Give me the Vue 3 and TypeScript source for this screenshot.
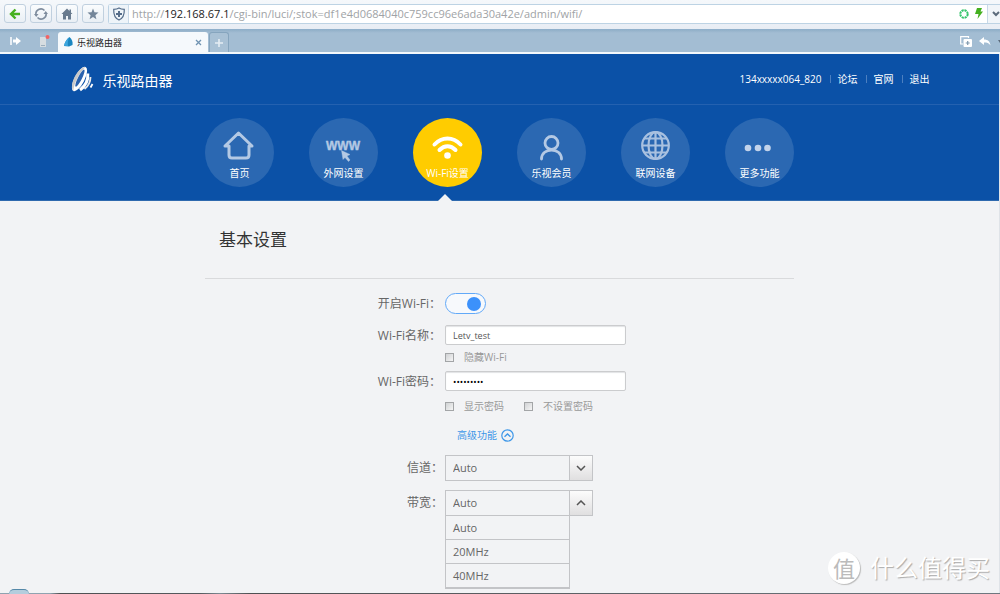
<script setup lang="ts">
import { ref } from 'vue'

interface NavItem {
  id: string
  label: string
}

const navItems: NavItem[] = [
  { id: 'home', label: '首页' },
  { id: 'wan', label: '外网设置' },
  { id: 'wifi', label: 'Wi-Fi设置' },
  { id: 'member', label: '乐视会员' },
  { id: 'devices', label: '联网设备' },
  { id: 'more', label: '更多功能' },
]
const accountLinks: string[] = ['论坛', '官网', '退出']
const bandwidths: string[] = ['Auto', '20MHz', '40MHz']

const active = ref('wifi')
const enabled = ref(true)
const ssid = ref('Letv_test')
const password = ref('letv12345')
const hidden = ref(false)
const showPassword = ref(false)
const noPassword = ref(false)
const channel = ref('Auto')
const bandwidth = ref('Auto')
</script>

<template>
  <div class="window">
    <div class="toolbar">
      <button class="tool" type="button" aria-label="后退">
        <svg width="12" height="12" viewBox="0 0 12 12"><path d="M6.5 1.5 2 6l4.500 4.500M2.500 6H11" fill="none" stroke="#45b020" stroke-width="2.400" /></svg>
      </button>
      <button class="tool" type="button" aria-label="刷新">
        <svg width="14" height="14" viewBox="0 0 14 14"><path d="M2 8a5 5 0 0 1 8.500-4.500M12 6a5 5 0 0 1-8.500 4.500" fill="none" stroke="#7f8d9e" stroke-width="1.600" /><path d="M0 7h4.500L2.200 10zM9.500 7H14l-2.300-3z" fill="#7f8d9e" /></svg>
      </button>
      <button class="tool" type="button" aria-label="主页">
        <svg width="12" height="12" viewBox="0 0 12 12"><path d="M6 .5 0.500 6H2v5.500h3V8h2v3.500h3V6h1.500L10 4.500V1.500H8.500V3z" fill="#687a8e" /></svg>
      </button>
      <button class="tool" type="button" aria-label="收藏">
        <svg width="12" height="12" viewBox="0 0 12 12"><path d="m6 .5 1.500 3.800 4 .3-3.100 2.600 1 4L6 9l-3.400 2.200 1-4L.5 4.600l4-.3z" fill="#74869a" /></svg>
      </button>
      <div class="address">
        <span class="shield">
          <svg width="14" height="14" viewBox="0 0 14 14"><path d="M7 1c2 1.300 3.500 1.300 5.300 1.300C12.500 8 11 11.500 7 13 3 11.500 1.500 8 1.700 2.300 3.500 2.300 5 2.300 7 1z" fill="none" stroke="#566e8b" stroke-width="1.200" /><path d="M7 4v6M4 7h6" stroke="#566e8b" stroke-width="2" /></svg>
        </span>
        <span class="url">http://<b>192.168.67.1</b>/cgi-bin/luci/;stok=df1e4d0684040c759cc96e6ada30a42e/admin/wifi/</span>
        <svg width="10" height="10" viewBox="0 0 10 10"><circle cx="5" cy="5" r="3.700" fill="none" stroke="#35c46b" stroke-width="2" stroke-dasharray="2.200 .7" /></svg>
        <svg class="bolt" width="8" height="11" viewBox="0 0 8 11"><path d="M2 0h5L5.500 3.500H8L2.500 11 3.500 6H0z" fill="#45b020" /></svg>
        <button class="drop" type="button" aria-label="展开地址栏">
          <svg width="8" height="6" viewBox="0 0 8 6"><path d="m1 1 3 3 3-3" fill="none" stroke="#5c6b7b" stroke-width="2" /></svg>
        </button>
      </div>
    </div>

    <div class="tabs">
      <button class="plain side" type="button" aria-label="侧边栏">
        <svg width="12" height="10" viewBox="0 0 12 10"><path d="M1 1v8" stroke="#fff" stroke-width="1.500" /><path d="M3 3.500h3V1l5 4-5 4V6.500H3z" fill="#fff" /></svg>
      </button>
      <button class="plain phone" type="button" aria-label="手机">
        <svg width="11" height="13" viewBox="0 0 11 13"><path d="M1 2h6v10H1z" fill="#d6dde1" /><path d="M2 10.500h4" stroke="#9caebc" /><circle cx="8.500" cy="2" r="2" fill="#f26464" /></svg>
      </button>
      <div class="tab">
        <svg width="9" height="10" viewBox="0 0 9 10"><path d="M5.500 0C8 2 9 5 8.500 8L5 9.500 0 9c.5-3 2.500-7 5.500-9z" fill="#1a86c0" /><path d="M5 .5C2 3 .5 6 .2 8.800L4 9c-.5-3 0-6 1-8.500z" fill="#3ba6de" /></svg>
        <span class="tab-title">乐视路由器</span>
        <button class="plain" type="button" aria-label="关闭标签">
          <svg width="7" height="7" viewBox="0 0 7 7"><path d="m1 1 5 5M6 1 1 6" stroke="#6f93b2" stroke-width="1.300" /></svg>
        </button>
      </div>
      <button class="add" type="button" aria-label="新标签">
        <svg width="8" height="8" viewBox="0 0 8 8"><path d="M4 0v8M0 4h8" stroke="#e5edf3" stroke-width="1.600" /></svg>
      </button>
      <span class="grow"></span>
      <button class="plain" type="button" aria-label="复制标签">
        <svg width="12" height="11" viewBox="0 0 12 11"><path d="M8.500 2V.7H.7V8H3" fill="none" stroke="#fff" stroke-width="1.200" /><rect x="3.500" y="3" width="8.500" height="8" rx="1" fill="#fff" /><path d="M7.700 5v4M5.700 7h4" stroke="#7f99ae" stroke-width="1.200" /></svg>
      </button>
      <button class="plain undo" type="button" aria-label="撤销关闭">
        <svg width="12" height="9" viewBox="0 0 12 9"><path d="M0 4 5 0v2.500c4 0 6 2 6.500 6C10 6 8 5.500 5 5.500V8z" fill="#fff" /></svg>
      </button>
      <svg width="2" height="3" viewBox="0 0 2 3"><path d="M0 0h2v3z" fill="#5c6b7b" /></svg>
    </div>

    <main class="page">
      <header class="hero">
        <div class="brandbar">
          <div class="brand-inner">
            <a class="brand" href="#">
              <svg width="24" height="28" viewBox="0 0 24 28">
                <path d="M17.800 8.500c.5 6-2.500 12.500-7.800 16.500" fill="none" stroke="#fff" stroke-width="3" />
                <path d="M20.500 12c0 5-2 9-6 12" fill="none" stroke="#e8e8e8" stroke-width="1.800" />
                <path d="m22.500 19-2 3.500" fill="none" stroke="#fff" stroke-width="1.800" />
                <g transform="rotate(27 9.500 14)">
                  <ellipse cx="9.500" cy="14" rx="5" ry="13.500" fill="#fff" />
                  <path d="M9.500.500c-7 3-7 24 0 27-3-6-3-21 0-27z" fill="#c9c9c9" />
                  <ellipse cx="9.500" cy="13" rx="2" ry="9.500" fill="#2a62ae" />
                </g>
              </svg>
              <span>乐视路由器</span>
            </a>
            <nav class="account" aria-label="账户">
              <a class="user" href="#">134xxxxx064_820</a>
              <a v-for="link in accountLinks" :key="link" class="link" href="#">{{ link }}</a>
            </nav>
          </div>
        </div>

        <nav class="nav" aria-label="主导航">
          <a
            v-for="item in navItems"
            :key="item.id"
            href="#"
            :class="['nav-item', { active: active === item.id }]"
            @click.prevent="active = item.id"
          >
            <svg class="glyph" viewBox="0 0 69 48">
              <g v-if="item.id === 'home'" fill="none" stroke="#b4c9e4" stroke-width="3" stroke-linecap="round" stroke-linejoin="round">
                <path d="M20 28 33.500 15 47 28M24 28v9q0 3 3 3h14q3 0 3-3V28M20 28h4M44 28h3" />
              </g>
              <g v-else-if="item.id === 'wan'" fill="#b4c9e4" stroke="#b4c9e4" stroke-width=".4">
                <text class="www" x="34" y="32" text-anchor="middle">WWW</text>
                <path d="m32.500 32.500 8.500 4-3 1.500 3 4-1.500 1.500-3.500-4-2 2z" />
              </g>
              <g v-else-if="item.id === 'wifi'" fill="none" stroke="#fff" stroke-width="4" stroke-linecap="round">
                <path d="M21.500 26.500c7.500-8 18.500-8 26 0M26.500 32c5-5 11-5 16 0" />
                <circle cx="34.500" cy="37.500" r="3.300" fill="#fff" stroke="none" />
              </g>
              <g v-else-if="item.id === 'member'" fill="none" stroke="#b4c9e4" stroke-width="2.800" stroke-linecap="round">
                <circle cx="34.500" cy="25" r="6.500" />
                <path d="M24.500 41c0-12 20-12 20 0" />
              </g>
              <g v-else-if="item.id === 'devices'" fill="none" stroke="#a9c1e0" stroke-width="2.200">
                <circle cx="34.500" cy="27.500" r="13.300" />
                <ellipse cx="34.500" cy="27.500" rx="7" ry="13.300" />
                <path d="M34.500 14v27M21 27.500h27M23 20.500h23M23 34.500h23" />
              </g>
              <g v-else fill="#c3d3ea">
                <circle cx="23" cy="30" r="3.300" /><circle cx="33" cy="30" r="3.300" /><circle cx="42.500" cy="30" r="3.300" />
              </g>
            </svg>
            <span class="nav-label">{{ item.label }}</span>
          </a>
        </nav>
      </header>

      <section class="content">
        <h1>基本设置</h1>
        <form class="form" @submit.prevent>
          <div class="row toggle-row">
            <label class="label" for="enable">开启Wi-Fi：</label>
            <input id="enable" v-model="enabled" class="switch" type="checkbox" role="switch" />
          </div>
          <div class="row">
            <label class="label" for="ssid">Wi-Fi名称：</label>
            <input id="ssid" v-model="ssid" class="text" type="text" />
          </div>
          <div class="checks">
            <label class="check"><input v-model="hidden" type="checkbox" /><span>隐藏Wi-Fi</span></label>
          </div>
          <div class="row">
            <label class="label" for="password">Wi-Fi密码：</label>
            <input id="password" v-model="password" class="text" :type="showPassword ? 'text' : 'password'" />
          </div>
          <div class="checks second">
            <label class="check"><input v-model="showPassword" type="checkbox" /><span>显示密码</span></label>
            <label class="check"><input v-model="noPassword" type="checkbox" /><span>不设置密码</span></label>
          </div>
          <a class="advanced" href="#">
            <span>高级功能</span>
            <svg width="13" height="13" viewBox="0 0 13 13"><circle cx="6.500" cy="6.500" r="5.700" fill="none" stroke="#3e97e8" stroke-width="1.200" /><path d="m3.500 7.700 3-2.700 3 2.700" fill="none" stroke="#3e97e8" stroke-width="1.400" /></svg>
          </a>
          <div class="row select-row">
            <label class="label" for="channel">信道：</label>
            <div class="combo">
              <select id="channel" v-model="channel"><option>Auto</option></select>
              <span class="arrow"><svg width="10" height="6" viewBox="0 0 10 6"><path d="m1 1 4 4 4-4" fill="none" stroke="#555" stroke-width="1.500" /></svg></span>
            </div>
          </div>
          <div class="row select-row">
            <label class="label" for="bandwidth">带宽：</label>
            <div class="combo">
              <select id="bandwidth" v-model="bandwidth">
                <option v-for="b in bandwidths" :key="b">{{ b }}</option>
              </select>
              <span class="arrow"><svg width="10" height="6" viewBox="0 0 10 6"><path d="m1 5 4-4 4 4" fill="none" stroke="#555" stroke-width="1.500" /></svg></span>
            </div>
          </div>
          <ul class="options">
            <li v-for="b in bandwidths" :key="b">
              <button type="button" @click="bandwidth = b">{{ b }}</button>
            </li>
          </ul>
        </form>
      </section>
    </main>

    <div class="watermark"><span class="seal">值</span><span>什么值得买</span></div>
    <div class="taskbar"><span class="orb"></span></div>
  </div>
</template>

<style>
body {
  margin: 0;
  overflow: hidden;
  background: #f2f3f5;
}
</style>

<style scoped>
.window {
  position: relative;
  display: flex;
  flex-direction: column;
  min-height: 100vh;
  font-family: "Open Sans", "Noto Sans CJK SC", sans-serif;
  font-size: 12px;
  color: #666;
}
.window * {
  box-sizing: border-box;
}
svg {
  display: block;
  flex: none;
}
a {
  color: inherit;
  text-decoration: none;
}
button,
input,
select {
  margin: 0;
  font-family: inherit;
}
.toolbar {
  display: flex;
  align-items: center;
  gap: 4px;
  height: 30px;
  padding: 2px 0 4px 4px;
  border-bottom: 1px solid #90b0cb;
  background: linear-gradient(#f5f8fb, #e8edf4);
}
.tool {
  display: flex;
  align-items: center;
  justify-content: center;
  width: 22px;
  height: 19px;
  padding: 0;
  border: 1px solid #c0d0df;
  border-radius: 3px;
  background: linear-gradient(#fafcfd, #e9eff5);
}
.address {
  display: flex;
  flex: 1;
  align-items: center;
  min-width: 0;
  height: 20px;
  border: 1px solid #bdd3e4;
  border-right: 0;
  border-radius: 3px 0 0 3px;
  background: #fff;
}
.shield {
  display: flex;
  align-items: center;
  justify-content: center;
  width: 20px;
  height: 100%;
  border-right: 1px solid #c8d9e8;
  background: #eef4f9;
}
.url {
  flex: 1;
  min-width: 0;
  padding-left: 3px;
  overflow: hidden;
  white-space: nowrap;
  font-size: 11px;
  color: #a0a3a6;
}
.url b {
  font-weight: 400;
  color: #222;
}
.bolt {
  margin: 0 4px 0 6px;
}
.drop {
  display: flex;
  align-items: center;
  justify-content: flex-end;
  width: 13px;
  height: 100%;
  padding: 0;
  border: 0;
  border-left: 1px solid #c8d9e8;
  background: #f1f5f9;
}
.tabs {
  display: flex;
  align-items: center;
  height: 24px;
  border-bottom: 2px solid #f3f8fc;
  background: linear-gradient(#92b0c9, #a3bdd3 3px);
}
.plain {
  padding: 0;
  border: 0;
  background: none;
}
.side {
  margin-left: 10px;
}
.phone {
  margin-left: 17px;
}
.tab {
  display: flex;
  align-items: center;
  align-self: flex-end;
  width: 150px;
  height: 20px;
  margin-left: 8px;
  padding: 0 6px;
  border-radius: 3px 3px 0 0;
  background: #f5f9fc;
}
.tab-title {
  flex: 1;
  padding-left: 4px;
  font-size: 9px;
  color: #222;
}
.add {
  display: flex;
  align-items: center;
  justify-content: center;
  align-self: flex-end;
  width: 20px;
  height: 20px;
  margin-left: 1px;
  padding: 0;
  border: 1px solid #86a5be;
  border-bottom: 0;
  border-radius: 3px 3px 0 0;
  background: #a9c1d5;
}
.grow {
  flex: 1;
}
.undo {
  margin: 0 7px;
}
.page {
  flex: 1;
  border-right: 1px solid #dfe3e8;
  background: #f2f3f5;
}
.hero {
  height: 147px;
  border-bottom: 1px solid #2e69ae;
  background: #0b51a7;
}
.brandbar {
  height: 51px;
  border-bottom: 1px solid #2461b0;
}
.brand-inner {
  display: flex;
  align-items: center;
  justify-content: space-between;
  max-width: 860px;
  height: 50px;
  margin: 0 auto;
  color: #fff;
}
.brand {
  display: flex;
  align-items: center;
  gap: 9px;
  font-size: 14px;
}
.brand span {
  padding-top: 2px;
}
.account {
  display: flex;
  font-size: 10px;
  line-height: 12px;
}
.link {
  display: flex;
  align-items: center;
}
.link::before {
  width: 1px;
  height: 8px;
  margin: 0 7px 0 8px;
  background: #4c7fc0;
  content: "";
}
.nav {
  display: flex;
  justify-content: space-between;
  max-width: 589px;
  margin: 13px auto 0;
}
.nav-item {
  position: relative;
  display: flex;
  flex-direction: column;
  align-items: center;
  width: 69px;
  height: 69px;
  border-radius: 50%;
  background: #2b68b2;
  color: #fff;
}
.nav-item.active {
  background: #fc0;
}
.nav-item.active::after {
  position: absolute;
  top: 76px;
  left: 50%;
  margin-left: -10px;
  border: 7px solid transparent;
  border-top: 0;
  border-bottom-color: #f2f3f5;
  content: "";
}
.glyph {
  width: 69px;
  height: 48px;
}
.www {
  font: bold 12px "Liberation Sans", sans-serif;
}
.nav-label {
  font-size: 10px;
  line-height: 15px;
}
.content {
  max-width: 589px;
  margin: 0 auto;
}
h1 {
  height: 78px;
  margin: 0;
  padding: 0 14px;
  border-bottom: 1px solid #d9dadc;
  font-size: 17px;
  font-weight: 400;
  line-height: 78px;
  color: #333;
}
.form {
  padding-top: 14px;
}
.row {
  display: flex;
  gap: 4px;
  height: 20px;
}
.label {
  width: 236px;
  line-height: 22px;
  text-align: right;
  white-space: nowrap;
}
.toggle-row {
  height: 22px;
  margin-bottom: 10px;
}
.switch {
  display: flex;
  align-items: center;
  justify-content: flex-end;
  width: 41px;
  height: 21px;
  padding: 0 4px;
  border: 1px solid #62a9f8;
  border-radius: 11px;
  appearance: none;
  background: #f7f9fc;
}
.switch::before {
  width: 14px;
  height: 14px;
  border-radius: 50%;
  background: #3c91fb;
  content: "";
}
.text {
  width: 181px;
  height: 20px;
  padding: 0 7px;
  border: 1px solid #cbccce;
  border-radius: 2px;
  background: #fff;
  box-shadow: inset 0 1px 1px #e2e3e5;
  font-size: 9px;
  color: #555;
}
.text[type="password"] {
  color: #000;
}
.checks {
  display: flex;
  gap: 20px;
  height: 26px;
  padding: 5px 0 0 240px;
}
.checks.second {
  height: 38px;
  padding-top: 8px;
}
.check {
  display: flex;
  align-items: center;
  gap: 10px;
  height: 14px;
  font-size: 10px;
  line-height: 14px;
  color: #999;
}
.check input {
  width: 9px;
  height: 9px;
  border: 1px solid #a3a5a7;
  appearance: none;
  background: linear-gradient(135deg, #d0d2d4, #f5f5f5);
}
.advanced {
  display: flex;
  align-items: center;
  gap: 4px;
  width: max-content;
  height: 13px;
  margin: 0 0 13px 252px;
  font-size: 10px;
  line-height: 13px;
  color: #3e97e8;
}
.select-row {
  gap: 2px;
  height: 26px;
  margin-bottom: 9px;
}
.select-row .label {
  width: 238px;
  line-height: 26px;
}
.combo {
  position: relative;
  width: 148px;
}
.combo select {
  display: block;
  width: 100%;
  height: 26px;
  padding: 0 30px 2px 7px;
  border: 1px solid #c3c4c7;
  border-radius: 0;
  appearance: none;
  background: #f2f3f5;
  font-size: 11px;
  color: #666;
}
.arrow {
  position: absolute;
  top: 1px;
  right: 1px;
  bottom: 1px;
  display: flex;
  align-items: center;
  justify-content: center;
  width: 23px;
  border-left: 1px solid #c3c4c7;
  background: linear-gradient(#fcfcfc, #e0dfe0);
  pointer-events: none;
}
.options {
  width: 125px;
  margin: -10px 0 0 240px;
  padding: 0;
  border: 1px solid #c3c4c7;
  border-bottom-width: 2px;
  list-style: none;
}
.options li + li {
  border-top: 1px solid #c3c4c7;
}
.options button {
  display: block;
  width: 100%;
  height: 23px;
  padding: 0 7px;
  border: 0;
  background: none;
  text-align: left;
  font-size: 11px;
  color: #666;
}
.watermark {
  position: absolute;
  right: 10px;
  bottom: 10px;
  display: flex;
  align-items: center;
  gap: 10px;
  font-size: 24px;
  line-height: 32px;
  color: #fff;
  text-shadow: 1px 1px 1px #aaa;
}
.seal {
  width: 32px;
  height: 32px;
  border-radius: 50%;
  background: #fff;
  box-shadow: 1px 1px 1px #bbb;
  text-align: center;
  font-size: 22px;
  color: #bbb;
  text-shadow: none;
}
.taskbar {
  position: absolute;
  right: 0;
  bottom: 0;
  left: 0;
  height: 1px;
  background: linear-gradient(90deg, #8fa3b0 5%, #4f5052 6%, #555a5e 20%, #7d8a93 22%, #4f5052 25%, #6f7880);
}
.orb {
  position: absolute;
  bottom: 0;
  left: 9px;
  width: 20px;
  height: 5px;
  border-top: 1px solid #5588a8;
  border-radius: 10px 10px 0 0;
  background: #b4cddd;
}
</style>
